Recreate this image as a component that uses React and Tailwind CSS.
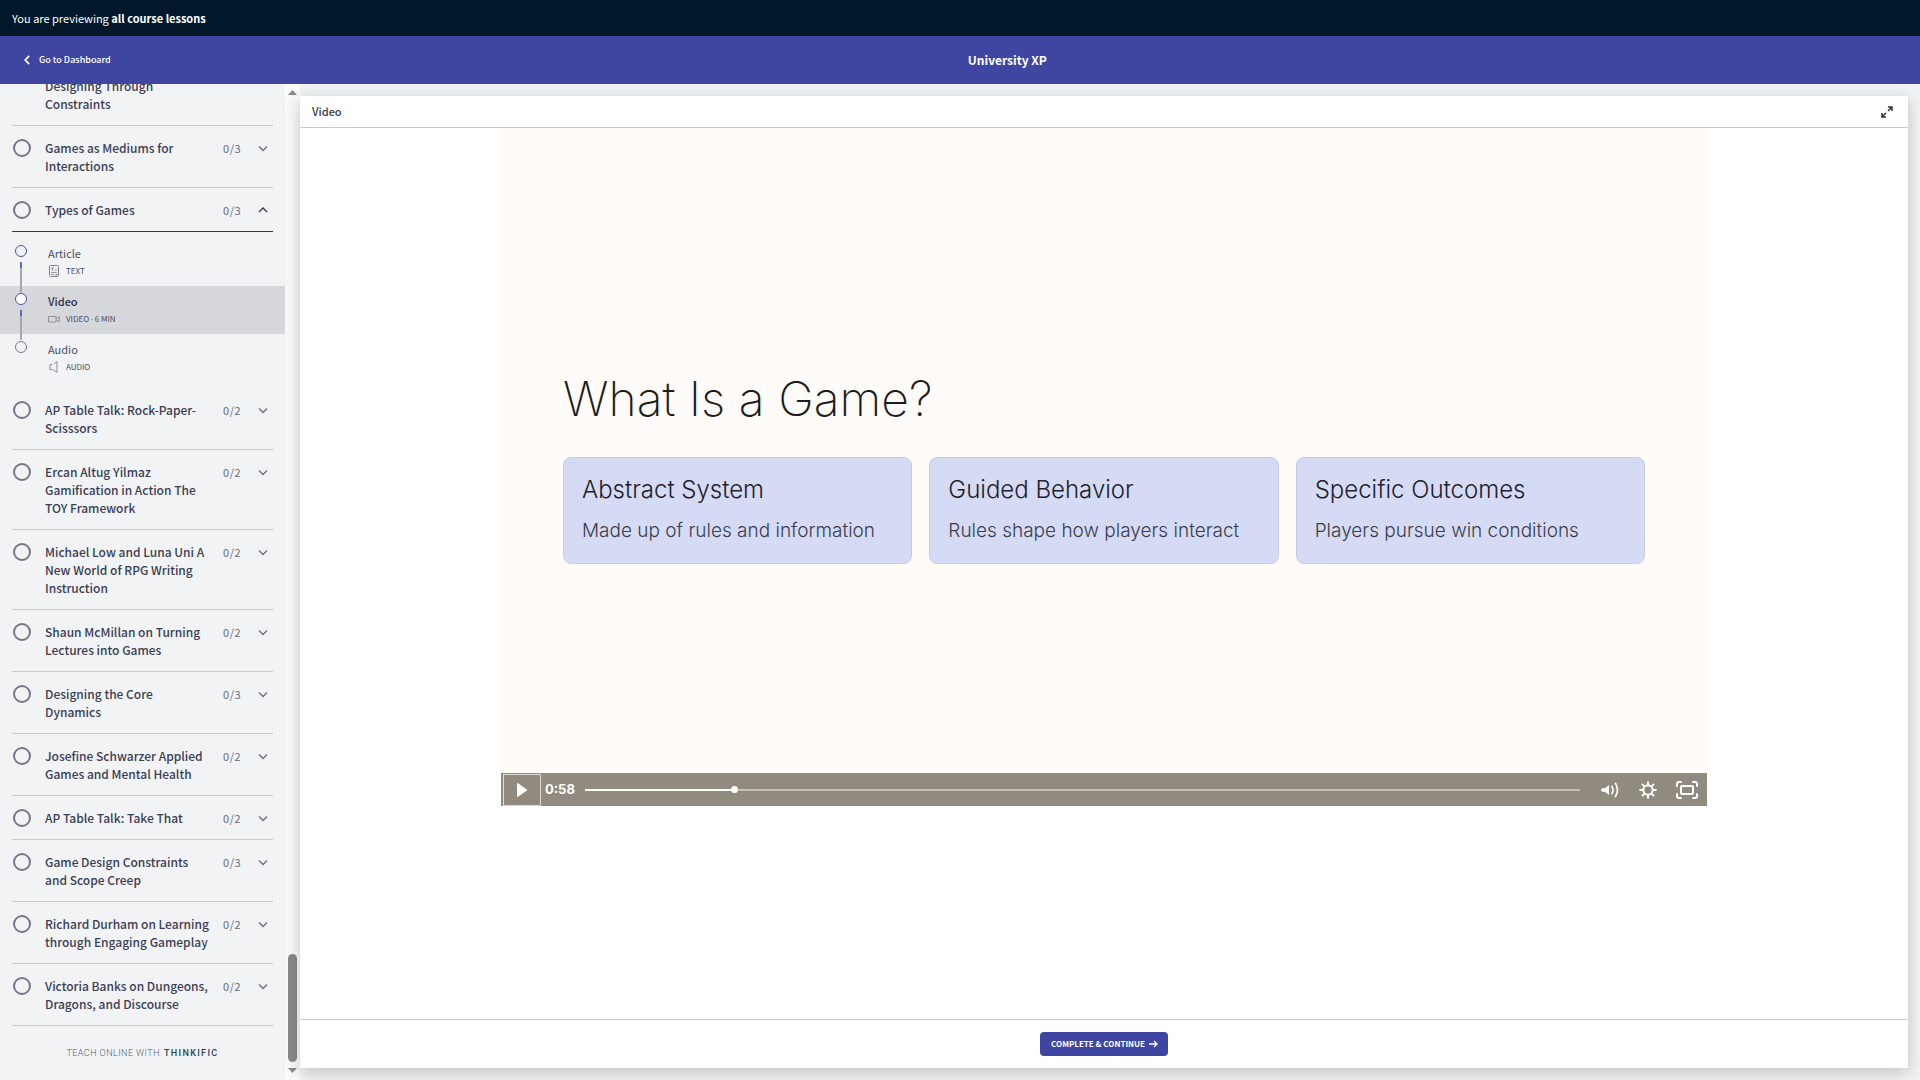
const sections = [
  { title: 'Games as Mediums for Interactions', count: '0/3' },
  { title: 'Types of Games', count: '0/3', open: true },
  { title: 'AP Table Talk: Rock-Paper-Scisssors', count: '0/2' },
  { title: 'Ercan Altug Yilmaz Gamification in Action The TOY Framework', count: '0/2' },
  { title: 'Michael Low and Luna Uni A New World of RPG Writing Instruction', count: '0/2' },
  { title: 'Shaun McMillan on Turning Lectures into Games', count: '0/2' },
  { title: 'Designing the Core Dynamics', count: '0/3' },
  { title: 'Josefine Schwarzer Applied Games and Mental Health', count: '0/2' },
  { title: 'AP Table Talk: Take That', count: '0/2' },
  { title: 'Game Design Constraints and Scope Creep', count: '0/3' },
  { title: 'Richard Durham on Learning through Engaging Gameplay', count: '0/2' },
  { title: 'Victoria Banks on Dungeons, Dragons, and Discourse', count: '0/2' },
];

const lessons = [
  { title: 'Article', meta: 'TEXT', icon: TextIcon, started: true, line: true },
  { title: 'Video', meta: 'VIDEO · 6 MIN', icon: VideoIcon, started: true, line: true, current: true },
  { title: 'Audio', meta: 'AUDIO', icon: AudioIcon },
];

const cards = [
  { title: 'Abstract System', text: 'Made up of rules and information' },
  { title: 'Guided Behavior', text: 'Rules shape how players interact' },
  { title: 'Specific Outcomes', text: 'Players pursue win conditions' },
];

function TextIcon() {
  return (
    <svg width="12" height="14" viewBox="0 0 12 14" fill="none" stroke="#7d8091" aria-hidden="true">
      <path d="M2.500 1.500h7a1 1 0 0 1 1 1v9a1 1 0 0 1-1 1h-7a1 1 0 0 1-1-1v-9a1 1 0 0 1 1-1z" />
      <path d="M3 4h3M4.500 4v3M6.500 6H9M3 8.500h6M3 10.500h3.500M8 12.500V10.500h2" strokeWidth="0.8" />
    </svg>
  );
}

function VideoIcon() {
  return (
    <svg width="12" height="14" viewBox="0 0 12 14" fill="none" stroke="#8d8f9b" aria-hidden="true">
      <path d="M0.500 4.500h7.500v5.500H0.500zM8.500 6.500l2.700-2v5.500l-2.700-2" />
    </svg>
  );
}

function AudioIcon() {
  return (
    <svg width="12" height="14" viewBox="0 0 12 14" fill="none" stroke="#8d8f9b" aria-hidden="true">
      <path d="M4.500 4.500H2v5h2.500L9 12.500v-11L6 3.800" />
    </svg>
  );
}

function Chevron({ up }) {
  return (
    <svg width="10" height="18" viewBox="0 0 10 18" fill="none" stroke={up ? '#36394d' : '#6f7182'} strokeWidth="1.4" aria-hidden="true">
      <path d={up ? 'M1 11l4-4 4 4' : 'M1 7.500l4 4 4-4'} />
    </svg>
  );
}

function Section({ title, count, open, tall }) {
  return (
    <button
      type="button"
      aria-expanded={!!open}
      className={`mx-3 flex shrink-0 items-start border-b pt-[13px] pb-3 text-left text-xs leading-[18px] ${open ? 'border-[#36394d]' : 'border-[#c8cad3]'}`}
    >
      <span className="ml-px size-[18px] shrink-0 rounded-full border-2 border-[#75778a]" />
      <span className={`ml-3.5 w-[165px] shrink-0 font-medium text-[#3b3e54] ${tall ? 'pt-[18px]' : ''}`}>{title}</span>
      <span className="ml-[13px] flex-1 text-[11px] leading-[18px] tracking-wider text-[#6a6c7d]">{count}</span>
      <span className="mr-[5px]">
        <Chevron up={open} />
      </span>
    </button>
  );
}

function Lesson({ title, meta, icon: Icon, started, line, current }) {
  return (
    <a href="#lesson" className={`flex h-12 ${current ? 'bg-[#d6d7da]' : ''}`}>
      <span className="ml-[15px] flex w-3 flex-col items-center pt-[7px]">
        <span
          className={`size-3 shrink-0 rounded-full border ${started ? 'border-[#4a51a6]' : 'border-[#75778a]'} ${current ? 'bg-white' : ''}`}
        />
        {line && (
          <>
            <span className="mt-[5px] h-1.5 w-0.5 shrink-0 bg-[#6469ad]" />
            <span className="h-6 w-0.5 shrink-0 bg-[#a4a6b3]" />
          </>
        )}
      </span>
      <span className="ml-[21px] flex flex-col pt-1.5">
        <span className={`text-[11px] leading-[18px] ${current ? 'font-medium text-[#2f3247]' : 'text-[#4b4e62]'}`}>{title}</span>
        <span className="mt-px flex h-4 items-center gap-1.5 text-[8px] leading-4 text-[#4b4e62]">
          <Icon />
          <span>
            {meta.split('·').map((part, i) => (
              <span key={part}>
                {i > 0 && <span className="font-['Open_Sans',sans-serif]">·</span>}
                {part}
              </span>
            ))}
          </span>
        </span>
      </span>
    </a>
  );
}

function Sidebar() {
  return (
    <aside className="flex w-[285px] shrink-0 flex-col justify-end overflow-hidden bg-[#f2f3f5]">
      <Section title="Designing Through Constraints" tall />
      {sections.map((s) => (
        <div key={s.title} className="flex shrink-0 flex-col">
          <Section {...s} />
          {s.open && (
            <nav className="py-1.5" aria-label={s.title}>
              {lessons.map((l) => (
                <Lesson key={l.title} {...l} />
              ))}
            </nav>
          )}
        </div>
      ))}
      <footer className="flex h-[54px] shrink-0 items-center justify-center gap-1 pt-0.5 font-['Roboto',sans-serif] text-[9px] font-light tracking-wider text-[#4f6272]">
        TEACH ONLINE WITH <a href="#thinkific" className="font-medium tracking-[0.15em] text-[#2c4356]">THINKIFIC</a>
      </footer>
    </aside>
  );
}

function Scrollbar() {
  return (
    <div className="flex w-[15px] shrink-0 flex-col items-center bg-[#fafafa] pt-1.5 pb-[7px]" aria-hidden="true">
      <svg width="9" height="5" viewBox="0 0 9 5" fill="#8a8a8a">
        <path d="M4.500 0L9 5H0z" />
      </svg>
      <div className="flex-1" />
      <div className="mb-1.5 h-[108px] w-[9px] rounded-full bg-[#8a8a8a]" />
      <svg width="9" height="5" viewBox="0 0 9 5" fill="#8a8a8a">
        <path d="M4.500 5L9 0H0z" />
      </svg>
    </div>
  );
}

function VideoPlayer() {
  return (
    <div className="flex aspect-video w-3/4 flex-col bg-[#fffbf8] font-['Inter',sans-serif]">
      <div className="flex flex-1 flex-col px-[62px] pt-[241px]">
        <h1 className="text-5xl leading-[60px] font-extralight text-[#1c1b1d]">What Is a Game?</h1>
        <div className="mt-7 grid grid-cols-3 gap-[17px]">
          {cards.map((c) => (
            <section key={c.title} className="h-[107px] rounded-lg border border-[#c6cdea] bg-[#d5dbf5] px-[18px] pt-4">
              <h2 className="text-2xl leading-8 font-light text-[#1f212b]">{c.title}</h2>
              <p className="mt-[13px] text-[19px] leading-6 font-light text-[#3a3d4b]">{c.text}</p>
            </section>
          ))}
        </div>
      </div>
      <div className="flex h-[33px] items-center bg-[#908b7e] pr-[9px] pl-0.5 text-white">
        <button type="button" aria-label="Play" className="flex h-8 w-[38px] items-center justify-center border border-[#dcd9d2]">
          <svg width="10" height="14" viewBox="0 0 10 14" fill="currentColor">
            <path d="M0.500 0.500L10 7l-9.500 6.500z" stroke="currentColor" strokeLinejoin="round" />
          </svg>
        </button>
        <span className="ml-1 w-10 text-[13px] font-bold">0:58</span>
        <div className="flex h-3 flex-1 items-center" role="progressbar" aria-label="Playback position" aria-valuenow={15}>
          <div className="h-0.5 w-[15%] bg-white" />
          <div className="-ml-[3px] size-[7px] rounded-full bg-white" />
          <div className="h-0.5 flex-1 bg-[#c3c0b8]" />
        </div>
        <button type="button" aria-label="Volume" className="ml-[21px]">
          <svg width="19" height="18" viewBox="0 0 19 18" fill="none" stroke="currentColor" strokeWidth="1.7" strokeLinecap="round">
            <path d="M1 7.500h2.500L8 4v10l-4.500-3.500H1z" fill="currentColor" stroke="none" />
            <path d="M1.500 9h2" strokeWidth="3" />
            <path d="M11 5.500q2 3.500 0 7M14.500 2.500q4 6.500 0 13" />
          </svg>
        </button>
        <button type="button" aria-label="Settings" className="ml-[19px]">
          <svg width="18" height="18" viewBox="0 0 18 18" fill="none" stroke="currentColor" strokeWidth="2" strokeLinecap="round">
            <circle cx="9" cy="9" r="4.700" />
            <path d="M9 1.200v2M9 14.800v2M1.200 9h2M14.800 9h2M3.500 3.500l1.400 1.400M13.100 13.100l1.400 1.400M3.500 14.500l1.400-1.400M13.100 4.900l1.400-1.400" />
          </svg>
        </button>
        <button type="button" aria-label="Fullscreen" className="ml-[19px]">
          <svg width="22" height="18" viewBox="0 0 22 18" fill="none" stroke="currentColor" strokeWidth="2" strokeLinecap="round">
            <rect x="5" y="5" width="12" height="8" rx="1" />
            <path d="M1 5V3q0-2 2-2h2M17 1h2q2 0 2 2v2M21 13v2q0 2-2 2h-2M5 17H3q-2 0-2-2v-2" />
          </svg>
        </button>
      </div>
    </div>
  );
}

export default function App() {
  return (
    <div className="flex h-screen flex-col bg-[#f2f3f5] font-['Noto_Sans_CJK_SC','Open_Sans',sans-serif] text-[#36394d]">
      <div className="flex h-9 shrink-0 items-center bg-[#001829] px-3 text-[11px] text-white">
        <p>
          You are previewing <b>all course lessons</b>
        </p>
      </div>
      <header className="flex h-12 shrink-0 items-center bg-[#3e46a2] pr-4 text-white">
        <a href="#dashboard" className="flex shrink-0 items-center gap-[9px] pl-6 text-[9px] font-medium">
          <svg width="6" height="10" viewBox="0 0 6 10" fill="none" stroke="currentColor" strokeWidth="1.800" aria-hidden="true">
            <path d="M5.200 0.800L1.200 5l4 4.200" />
          </svg>
          Go to Dashboard
        </a>
        <p className="flex-1 text-center text-xs font-bold">University XP</p>
      </header>
      <div className="flex min-h-0 flex-1">
        <Sidebar />
        <Scrollbar />
        <main className="mt-3 mr-3 mb-3 flex flex-1 flex-col bg-white shadow-[0_4px_16px_rgba(0,0,0,0.22)]">
          <div className="flex h-8 shrink-0 items-center justify-between border-b border-[#c8cad3] px-3">
            <h2 className="pb-px text-[11px] font-medium">Video</h2>
            <button type="button" aria-label="Expand" className="mr-[3px]">
              <svg width="12" height="12" viewBox="0 0 12 12" fill="none" stroke="#2f3247" strokeWidth="1.500">
                <path d="M7 1h4v4M11 1L7 5M5 11H1V7M1 11l4-4" />
              </svg>
            </button>
          </div>
          <div className="flex min-h-0 flex-1 flex-col items-center">
            <VideoPlayer />
          </div>
          <div className="flex h-[49px] shrink-0 items-center justify-center border-t border-[#c8cad3]">
            <button type="button" className="flex h-6 items-center gap-1 rounded-sm bg-[#3e46a2] pr-2.5 pl-[11px] text-[8px] font-bold text-white">
              COMPLETE &amp; CONTINUE
              <svg width="9" height="8" viewBox="0 0 9 8" fill="none" stroke="currentColor" strokeWidth="1.300" aria-hidden="true">
                <path d="M0 4h8M5 1l3 3-3 3" />
              </svg>
            </button>
          </div>
        </main>
      </div>
    </div>
  );
}
